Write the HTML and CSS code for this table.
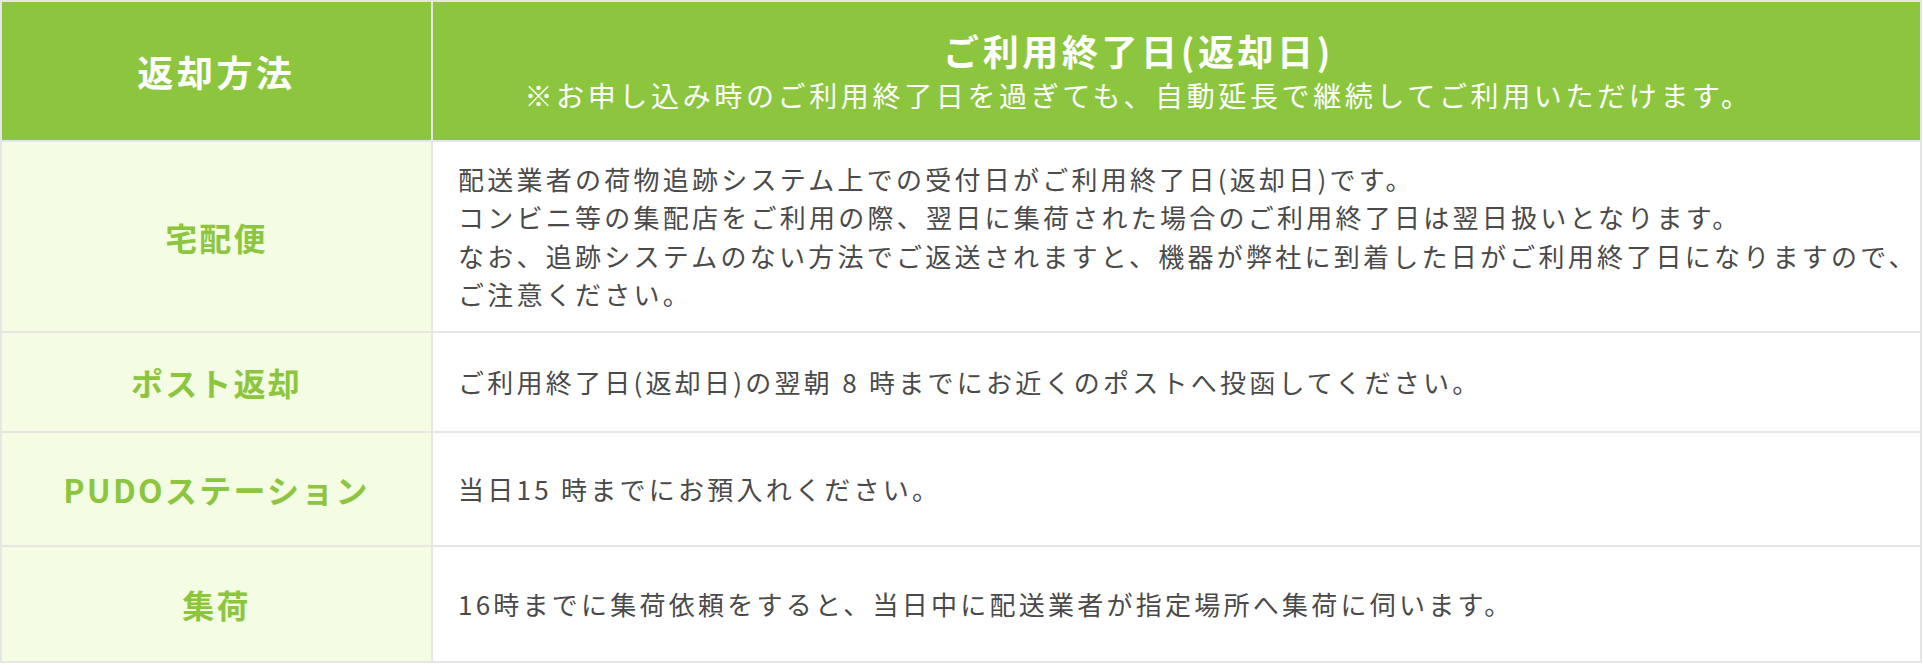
FILE: index.html
```html
<!DOCTYPE html>
<html lang="ja">
<head>
<meta charset="utf-8">
<title>返却方法</title>
<link rel="stylesheet" href="styles.css">
</head>
<body>
<table class="return-table">
  <thead>
    <tr class="head-row">
      <th class="head-cell head-method">返却方法</th>
      <th class="head-cell head-date">
        <div class="head-title">ご利用終了日(返却日)</div>
        <div class="head-note">※お申し込み時のご利用終了日を過ぎても、自動延長で継続してご利用いただけます。</div>
      </th>
    </tr>
  </thead>
  <tbody>
    <tr class="row-takuhai">
      <th class="method">宅配便</th>
      <td class="desc">配送業者の荷物追跡システム上での受付日がご利用終了日(返却日)です。<br>コンビニ等の集配店をご利用の際、翌日に集荷された場合のご利用終了日は翌日扱いとなります。<br>なお、追跡システムのない方法でご返送されますと、機器が弊社に到着した日がご利用終了日になりますので、<br>ご注意ください。</td>
    </tr>
    <tr class="row-post">
      <th class="method">ポスト返却</th>
      <td class="desc">ご利用終了日(返却日)の翌朝 8 時までにお近くのポストへ投函してください。</td>
    </tr>
    <tr class="row-pudo">
      <th class="method">PUDOステーション</th>
      <td class="desc">当日15 時までにお預入れください。</td>
    </tr>
    <tr class="row-pickup">
      <th class="method">集荷</th>
      <td class="desc">16時までに集荷依頼をすると、当日中に配送業者が指定場所へ集荷に伺います。</td>
    </tr>
  </tbody>
</table>
</body>
</html>
```

FILE: styles.css
```css
html, body {
  margin: 0;
  padding: 0;
  background: #ffffff;
}

body {
  font-family: "Noto Sans CJK JP", "Noto Sans", sans-serif;
  color: #4a4a4a;
}

.return-table {
  width: 1922px;
  table-layout: fixed;
  border-collapse: separate;
  border-spacing: 0;
  border-top: 2px solid #e6e6e6;
  border-left: 2px solid #e6e6e6;
}

.return-table th,
.return-table td {
  border-right: 2px solid #e6e6e6;
  border-bottom: 2px solid #e6e6e6;
  padding: 0;
  box-sizing: border-box;
}

.head-row {
  height: 140px;
}

.head-cell {
  background: #8cc63f;
  color: #ffffff;
  text-align: center;
  vertical-align: middle;
}

.head-method {
  width: 431px;
  font-size: 36px;
  font-weight: 700;
  letter-spacing: 0.1em;
  line-height: 1.4;
}

.head-date {
  padding-right: 76px !important;
}

.head-title {
  font-size: 36px;
  font-weight: 700;
  letter-spacing: 0.1em;
  line-height: 1.35;
}

.head-note {
  font-size: 28px;
  font-weight: 400;
  letter-spacing: 0.13em;
  line-height: 1.5;
  white-space: nowrap;
}

.method {
  background: #f4fde3;
  color: #8cc63f;
  font-size: 32px;
  font-weight: 700;
  letter-spacing: 0.07em;
  text-align: center;
  vertical-align: middle;
}

.desc {
  padding: 0 0 0 25px !important;
  font-size: 26px;
  font-weight: 400;
  letter-spacing: 0.125em;
  line-height: 38.4px;
  text-align: left;
  vertical-align: middle;
  white-space: nowrap;
  color: #4a4a4a;
}

.row-takuhai { height: 191px; }
.row-post { height: 100px; }
.row-pudo { height: 114px; }
.row-pickup { height: 116px; }
```
